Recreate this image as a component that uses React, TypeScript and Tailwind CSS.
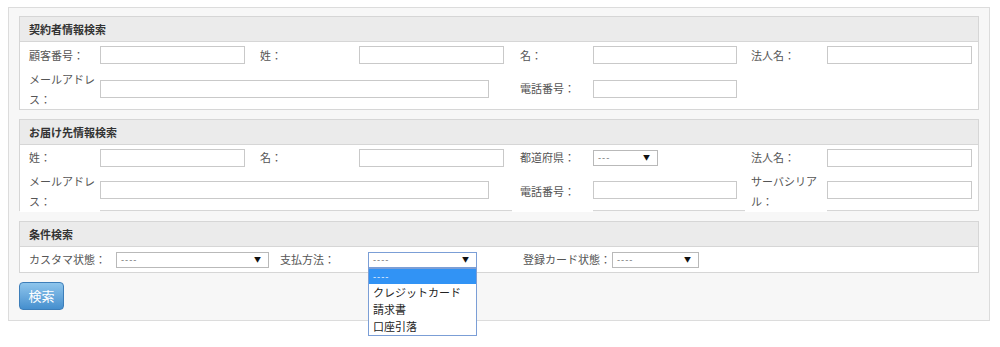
import React from 'react';

const font = { fontFamily: '"Noto Sans CJK JP", "Noto Sans", sans-serif' };

const TextBox: React.FC<{ w: string }> = ({ w }) => (
  <div className={`${w} h-[18px] border border-[#c9c9c9] bg-white`} />
);

const FakeSelect: React.FC<{ w: string; value: string; focus?: boolean }> = ({ w, value, focus }) => (
  <div
    className={`${w} h-[16px] border ${focus ? 'border-[#7b9ed6]' : 'border-[#b9b9b9]'} bg-white flex items-center justify-between pl-[4px] pr-[7px]`}
  >
    <span className="text-[9px] leading-none text-[#666] tracking-[1px]">{value}</span>
    <span className="text-[7px] leading-none text-[#111]">▼</span>
  </div>
);

const Label: React.FC<{ children: React.ReactNode; className?: string }> = ({ children, className = '' }) => (
  <div className={`text-[11px] text-[#555] whitespace-nowrap ${className}`}>{children}</div>
);

const SectionHeader: React.FC<{ title: string }> = ({ title }) => (
  <div className="h-[25px] bg-[#ebebeb] border-b border-[#d6d6d6] flex items-center pl-[9px] text-[11px] font-bold text-[#333]">
    {title}
  </div>
);

const cols = 'grid grid-cols-[80px_160px_99px_153px_81px_152px_82px_145px]';

const App: React.FC = () => {
  return (
    <div className="pl-2 pt-[7px] w-[1000px] h-[347px] bg-white" style={font}>
      <div className="w-[982px] border border-[#dcdcdc] bg-[#f7f7f7] pt-2 px-[10px] pb-[10px]">
        {/* 契約者情報検索 */}
        <div className="border border-[#d6d6d6] bg-white">
          <SectionHeader title="契約者情報検索" />
          <div className={cols}>
            <div className="h-[26px] flex items-center pl-[9px]"><Label>顧客番号：</Label></div>
            <div className="h-[26px] flex items-center"><TextBox w="w-[145px]" /></div>
            <div className="h-[26px] flex items-center"><Label>姓：</Label></div>
            <div className="h-[26px] flex items-center"><TextBox w="w-[145px]" /></div>
            <div className="h-[26px] flex items-center pl-[8px]"><Label>名：</Label></div>
            <div className="h-[26px] flex items-center"><TextBox w="w-[144px]" /></div>
            <div className="h-[26px] flex items-center pl-[6px]"><Label>法人名：</Label></div>
            <div className="h-[26px] flex items-center"><TextBox w="w-[145px]" /></div>

            <div className="h-[41px] flex items-center pl-[9px]">
              <Label className="leading-[20px]">メールアドレ<br />ス：</Label>
            </div>
            <div className="col-span-3 h-[41px] flex items-center"><TextBox w="w-[389px]" /></div>
            <div className="h-[41px] flex items-center pl-[8px]"><Label>電話番号：</Label></div>
            <div className="h-[41px] flex items-center"><TextBox w="w-[144px]" /></div>
            <div />
            <div />
          </div>
        </div>

        {/* お届け先情報検索 */}
        <div className="mt-[9px] border border-[#d6d6d6] bg-white">
          <SectionHeader title="お届け先情報検索" />
          <div className={`${cols} h-[65px]`}>
            <div className="h-[25px] flex items-center pl-[9px]"><Label>姓：</Label></div>
            <div className="h-[25px] flex items-center"><TextBox w="w-[145px]" /></div>
            <div className="h-[25px] flex items-center"><Label>名：</Label></div>
            <div className="h-[25px] flex items-center"><TextBox w="w-[145px]" /></div>
            <div className="h-[25px] flex items-center pl-[8px]"><Label>都道府県：</Label></div>
            <div className="h-[25px] flex items-center"><FakeSelect w="w-[65px]" value="---" /></div>
            <div className="h-[25px] flex items-center pl-[6px]"><Label>法人名：</Label></div>
            <div className="h-[25px] flex items-center"><TextBox w="w-[145px]" /></div>

            <div className="h-[42px] flex items-center pl-[9px] bg-white">
              <Label className="leading-[20px]">メールアドレ<br />ス：</Label>
            </div>
            <div className="col-span-3 h-[40px] flex items-center"><TextBox w="w-[389px]" /></div>
            <div className="h-[42px] flex items-center pl-[8px] bg-white"><Label>電話番号：</Label></div>
            <div className="h-[40px] flex items-center"><TextBox w="w-[144px]" /></div>
            <div className="h-[42px] flex items-center pl-[6px] bg-white">
              <Label className="leading-[20px]">サーバシリア<br />ル：</Label>
            </div>
            <div className="h-[40px] flex items-center"><TextBox w="w-[145px]" /></div>
          </div>
        </div>

        {/* 条件検索 */}
        <div className="mt-[10px] border border-[#d6d6d6] bg-white">
          <SectionHeader title="条件検索" />
          <div className="h-[25px] flex items-center pl-[9px]">
            <Label className="w-[87px]">カスタマ状態：</Label>
            <FakeSelect w="w-[153px]" value="----" />
            <Label className="ml-[11px] w-[88px]">支払方法：</Label>
            <div className="relative">
              <FakeSelect w="w-[109px]" value="----" focus />
              <div className="absolute left-0 top-full w-[109px] border border-[#7b9ed6] bg-white z-10 text-[11px] text-[#222]">
                <div className="h-[15px] bg-[#3193f5] flex items-center pl-[4px]">
                  <span className="text-[9px] leading-none text-white tracking-[1px]">----</span>
                </div>
                <div className="h-[17px] leading-[17px] pl-[4px]">クレジットカード</div>
                <div className="h-[17px] leading-[17px] pl-[4px]">請求書</div>
                <div className="h-[17px] leading-[17px] pl-[4px]">口座引落</div>
              </div>
            </div>
            <Label className="ml-[46px] w-[89px]">登録カード状態：</Label>
            <FakeSelect w="w-[87px]" value="----" />
          </div>
        </div>

        <button
          type="button"
          className="mt-[9px] w-[45px] h-[28px] rounded-[4px] border border-[#3d7eb9] bg-gradient-to-b from-[#8ec5ec] to-[#458fce] text-white text-[13px] flex items-center justify-center"
        >
          検索
        </button>
      </div>
    </div>
  );
};

export default App;
